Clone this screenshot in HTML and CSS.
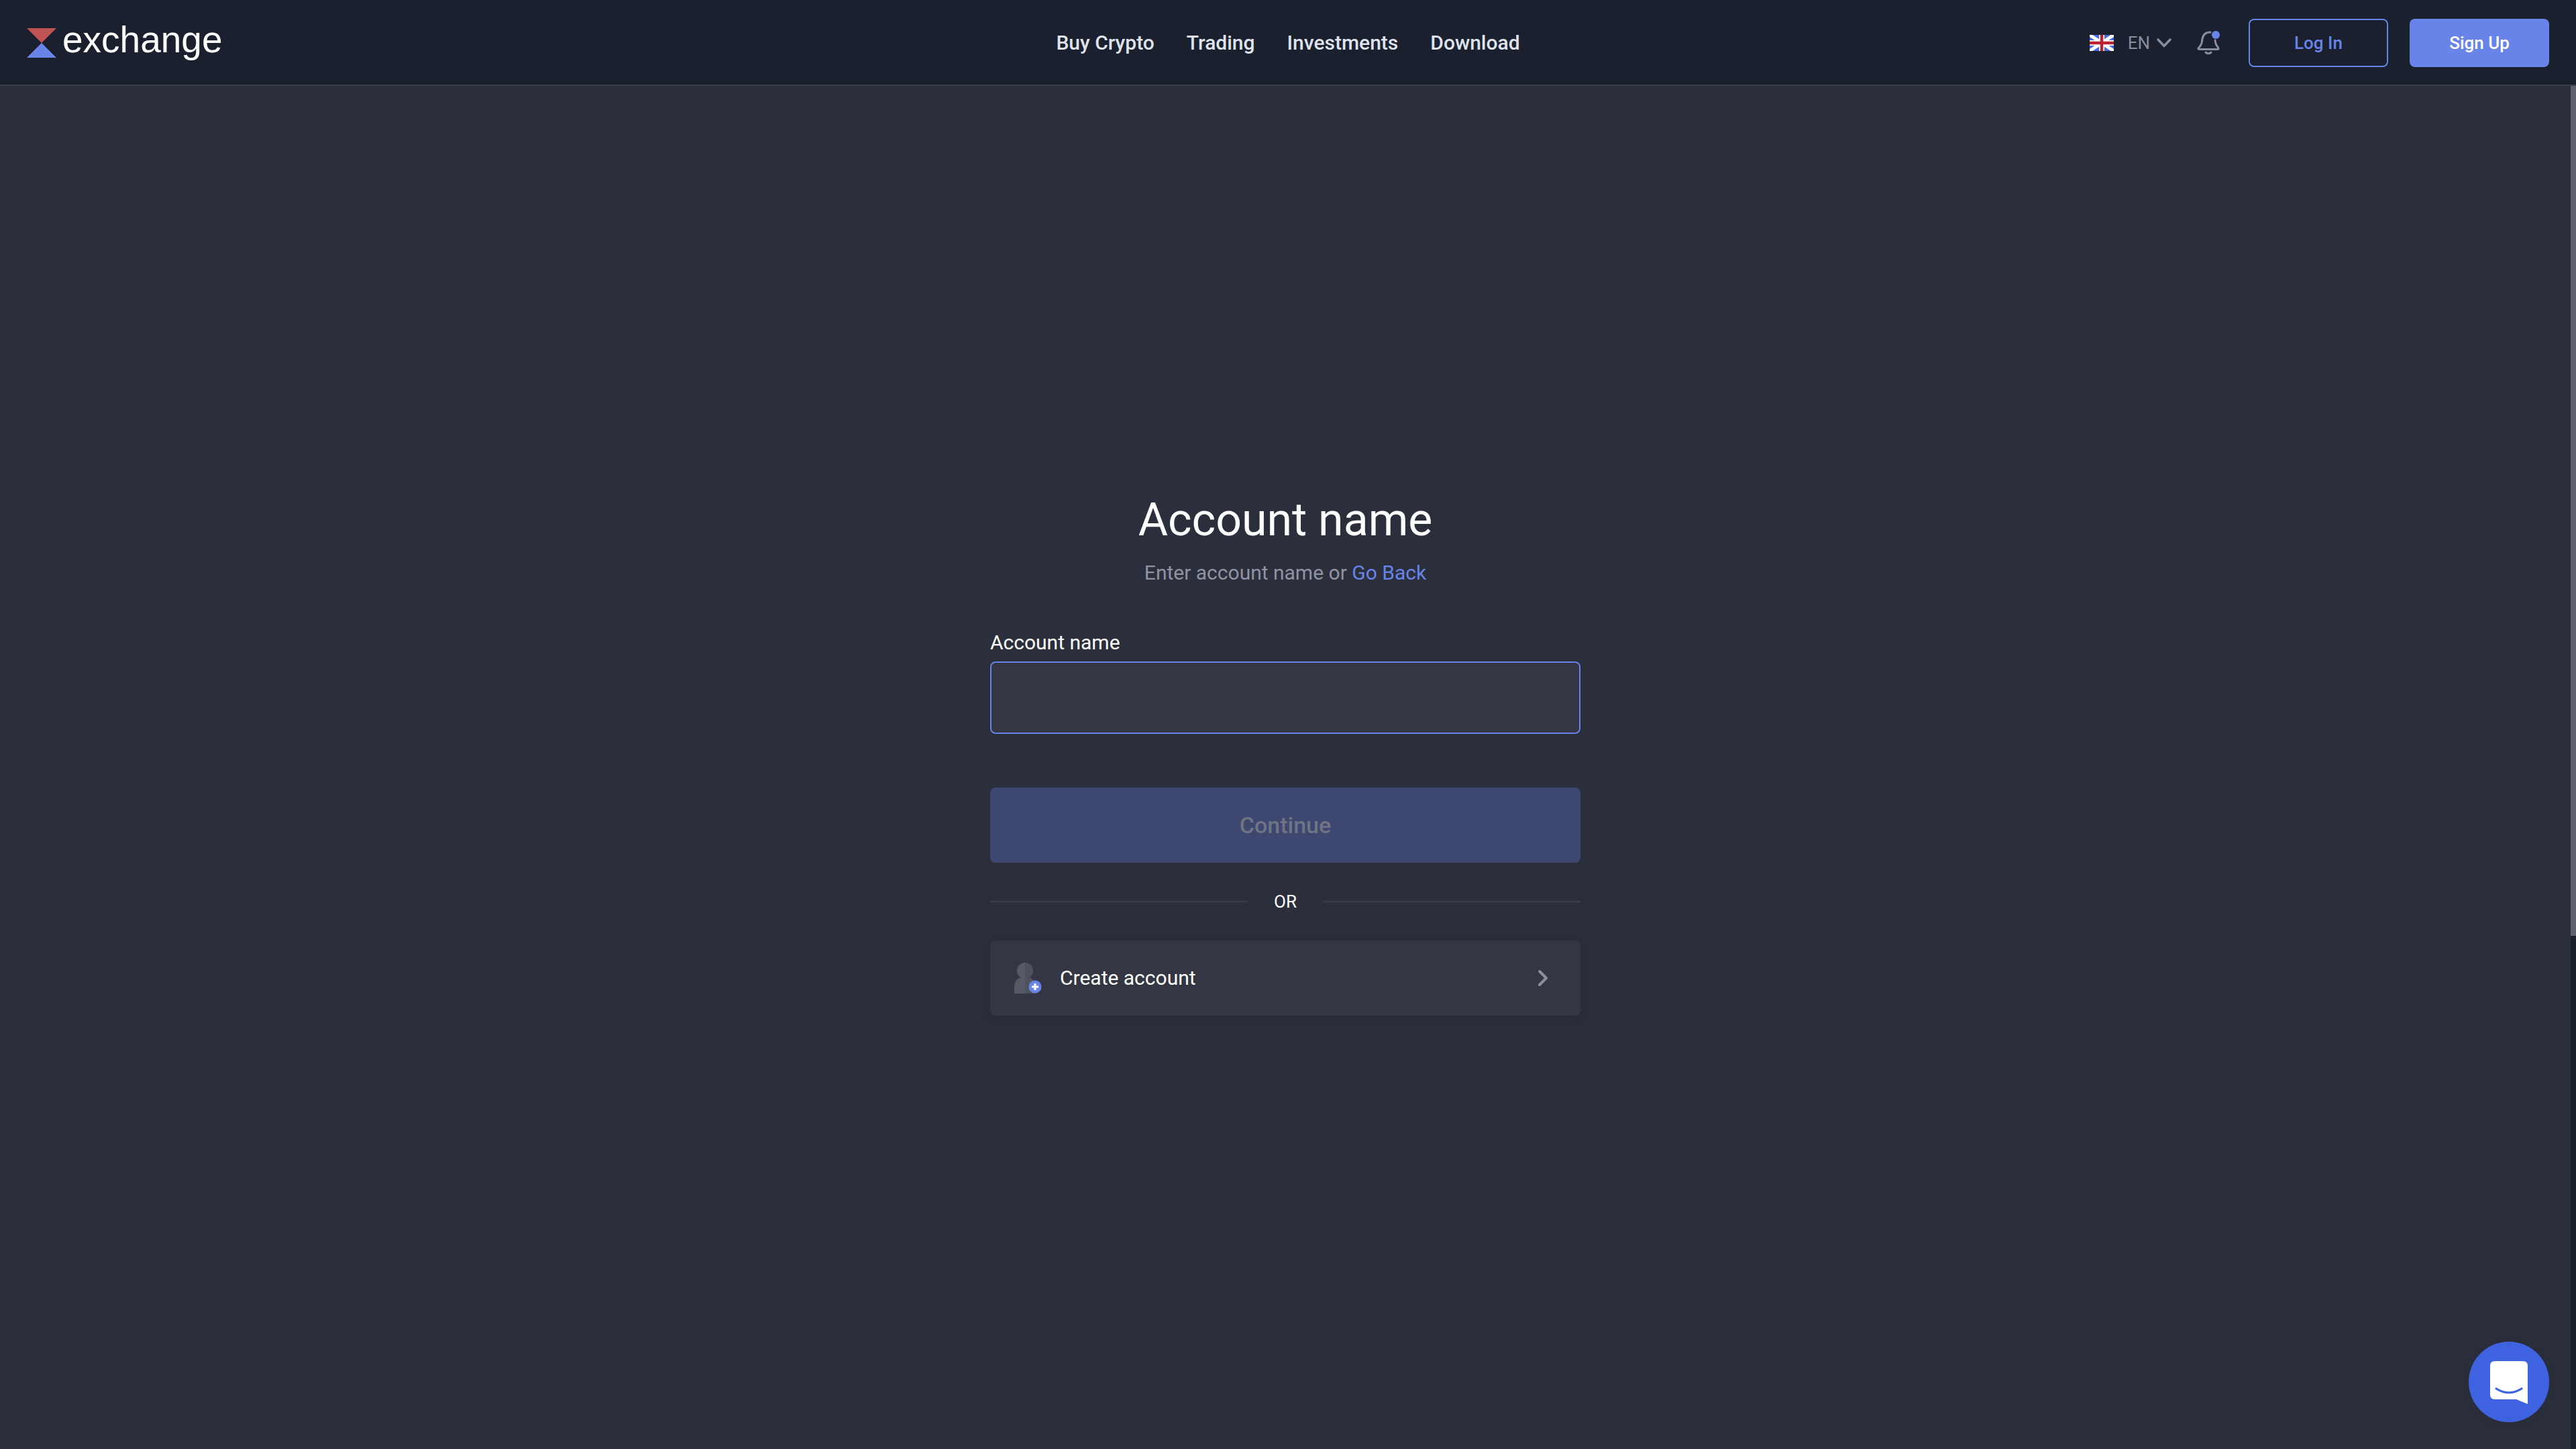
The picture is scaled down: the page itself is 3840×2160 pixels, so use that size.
FILE: index.html
```html
<!DOCTYPE html>
<html lang="en">
<head>
  <meta charset="UTF-8">
  <title>Account name</title>
  <link rel="stylesheet" href="styles.css">
</head>
<body>

  <!-- Top bar -->
  <header class="topbar">
    <a href="#" class="logo">
      <svg class="logo-mark" width="44" height="44" viewBox="0 0 44 44">
        <polygon points="0,0 44,0 22,22" fill="#c05454"/>
        <polygon points="0,44 44,44 22,22" fill="#6884e8"/>
      </svg>
      <span class="logo-text">exchange</span>
    </a>

    <nav class="nav">
      <a href="#">Buy Crypto</a>
      <a href="#">Trading</a>
      <a href="#">Investments</a>
      <a href="#">Download</a>
    </nav>

    <div class="actions">
      <div class="lang">
        <svg width="36" height="24" viewBox="0 0 36 24">
          <rect width="36" height="24" fill="#4168e8"/>
          <path d="M0 0 L36 24 M36 0 L0 24" stroke="#fff" stroke-width="5"/>
          <path d="M18 0 V24 M0 12 H36" stroke="#fff" stroke-width="8"/>
          <path d="M18 0 V24 M0 12 H36" stroke="#b8222e" stroke-width="4.500"/>
        </svg>
        <span class="lang-code">EN</span>
        <svg width="22" height="14" viewBox="0 0 22 14">
          <path d="M2 2 L11 11.500 L20 2" fill="none" stroke="#8a8e9e" stroke-width="3.400" stroke-linecap="round" stroke-linejoin="round"/>
        </svg>
      </div>
      <svg class="bell" width="34" height="36" viewBox="0 0 34 36">
        <path d="M20 2 C13 2 9 6 8 12 L7 18 C6 22 4 24 2 26 Q1.500 27.500 4 27.500 H30 Q32.500 27.500 32 26 C31 24 29 22 28 19 L27 14" fill="none" stroke="#8a8e9e" stroke-width="3" stroke-linecap="round" stroke-linejoin="round"/>
        <path d="M13 32 Q17 35.500 21 32" fill="none" stroke="#8a8e9e" stroke-width="3" stroke-linecap="round"/>
        <circle cx="28" cy="6" r="6" fill="#6884e8"/>
      </svg>
      <a href="#" class="btn btn-outline">Log In</a>
      <a href="#" class="btn btn-solid">Sign Up</a>
    </div>
  </header>

  <div class="page">
    <main class="content">
      <form class="form">
        <h1>Account name</h1>
        <p class="subtitle">Enter account name or <a href="#">Go Back</a></p>

        <label class="field-label" for="accountName">Account name</label>
        <input class="field-input" id="accountName" type="text">

        <button class="continue" type="button" disabled>Continue</button>

        <div class="divider"><span>OR</span></div>

        <a href="#" class="create-card">
          <svg width="42" height="46" viewBox="0 0 42 46">
            <path d="M16 0 A12 12 0 0 0 16 24 Z" fill="#565966"/>
            <path d="M16 0 A12 12 0 0 1 16 24 Z" fill="#4e515e"/>
            <path d="M0 46 V36 C0 26 7 21 16 21 V46 Z" fill="#565966"/>
            <path d="M16 21 C25 21 32 26 32 36 V46 H16 Z" fill="#4e515e"/>
            <circle cx="31" cy="36" r="9.500" fill="#6884e8"/>
            <path d="M31 31 V41 M26 36 H36" stroke="#fff" stroke-width="3.200"/>
          </svg>
          <span class="create-text">Create account</span>
          <svg class="create-arrow" width="16" height="26" viewBox="0 0 16 26">
            <path d="M3 3 L13 13 L3 23" fill="none" stroke="#8a8e9e" stroke-width="4" stroke-linecap="round" stroke-linejoin="round"/>
          </svg>
        </a>
      </form>
    </main>

    <!-- Page scrollbar -->
    <div class="scrollbar"><div class="scrollbar-thumb"></div></div>
  </div>

  <!-- Chat launcher -->
  <a href="#" class="chat">
    <svg width="56" height="64" viewBox="0 0 56 64">
      <path d="M7 0 H49 Q56 0 56 7 V64 L39 57 H7 Q0 57 0 50 V7 Q0 0 7 0 Z" fill="#fff"/>
      <path d="M9 41 Q28 53 47 41" fill="none" stroke="#3f62e0" stroke-width="3.200" stroke-linecap="round"/>
    </svg>
  </a>

</body>
</html>
```

FILE: styles.css
```css
* {
  box-sizing: border-box;
}

html, body {
  height: 100%;
}

body {
  margin: 0;
  display: flex;
  flex-direction: column;
  height: 2160px;
  overflow: hidden;
  background: #2b2f3b;
  font-family: Roboto, sans-serif;
  color: #fff;
}

a {
  text-decoration: none;
  color: inherit;
}

/* Top bar */
.topbar {
  flex: 0 0 128px;
  display: grid;
  grid-template-columns: 1fr auto 1fr;
  align-items: center;
  padding: 2px 40px 0;
  background: #1a202d;
  border-bottom: 2px solid #3a3d4a;
}

.logo {
  display: flex;
  align-items: center;
  gap: 9px;
}

.logo-text {
  font-family: "Liberation Sans", Arial, sans-serif;
  font-size: 55px;
  line-height: 60px;
  color: #fff;
  margin-top: -10px;
}

.nav {
  display: flex;
  gap: 48px;
  margin-top: -2px;
  font-size: 30px;
  font-weight: 500;
  color: #dfe3ee;
}

.actions {
  display: flex;
  align-items: center;
  justify-content: flex-end;
}

.lang {
  display: flex;
  align-items: center;
  gap: 10px;
}

.lang-code {
  font-size: 26px;
  color: #8a8e9e;
  margin-left: 11px;
}

.bell {
  margin-left: 38px;
  margin-right: 43px;
}

.btn {
  display: flex;
  align-items: center;
  justify-content: center;
  width: 208px;
  height: 72px;
  border-radius: 8px;
  font-size: 26px;
  font-weight: 500;
}

.btn-outline {
  border: 2px solid #6884e8;
  color: #6884e8;
}

.btn-solid {
  margin-left: 32px;
  background: #6884e8;
  color: #fff;
}

/* Main area */
.page {
  flex: 1;
  display: flex;
  min-height: 0;
}

.content {
  flex: 1;
  display: flex;
  justify-content: center;
  padding-top: 605px;
}

.scrollbar {
  flex: 0 0 8px;
  background: #1a202d;
}

.scrollbar-thumb {
  height: 1267px;
  background: #5f6270;
}

.form {
  width: 880px;
  display: flex;
  flex-direction: column;
}

h1 {
  margin: 0;
  font-size: 68px;
  font-weight: 400;
  line-height: 84px;
  text-align: center;
}

.subtitle {
  margin: 17px 0 0;
  font-size: 30px;
  line-height: 40px;
  color: #8f93a3;
  text-align: center;
}

.subtitle a {
  color: #6884e8;
}

.field-label {
  margin-top: 64px;
  font-size: 30px;
  line-height: 40px;
  color: #fff;
}

.field-input {
  margin-top: 8px;
  width: 100%;
  height: 108px;
  background: #343743;
  border: 2px solid #6884e8;
  border-radius: 8px;
  outline: none;
  color: #fff;
  font: inherit;
}

.continue {
  margin-top: 80px;
  height: 112px;
  background: #3e4770;
  border: none;
  border-radius: 8px;
  color: #6f7485;
  font-family: Roboto, sans-serif;
  font-size: 34px;
  font-weight: 500;
}

.divider {
  display: flex;
  align-items: center;
  gap: 40px;
  margin-top: 40px;
  height: 36px;
  font-size: 26px;
  line-height: 36px;
}

.divider::before,
.divider::after {
  content: "";
  flex: 1;
  height: 2px;
  background: #3a3d4a;
}

.create-card {
  margin-top: 40px;
  height: 112px;
  display: flex;
  align-items: center;
  padding: 0 48px 0 36px;
  background: #343743;
  border-radius: 8px;
  box-shadow: 0 4px 16px rgba(0,0,0,0.12);
}

.create-text {
  flex: 1;
  margin-left: 26px;
  margin-top: -2px;
  font-size: 30px;
}

/* Chat launcher */
.chat {
  position: fixed;
  right: 40px;
  bottom: 40px;
  width: 120px;
  height: 120px;
  border-radius: 50%;
  background: #3f62e0;
  display: flex;
  align-items: center;
  justify-content: center;
  box-shadow: 0 2px 16px rgba(0,0,0,0.08);
}

.chat svg {
  margin-top: 2px;
}
```
